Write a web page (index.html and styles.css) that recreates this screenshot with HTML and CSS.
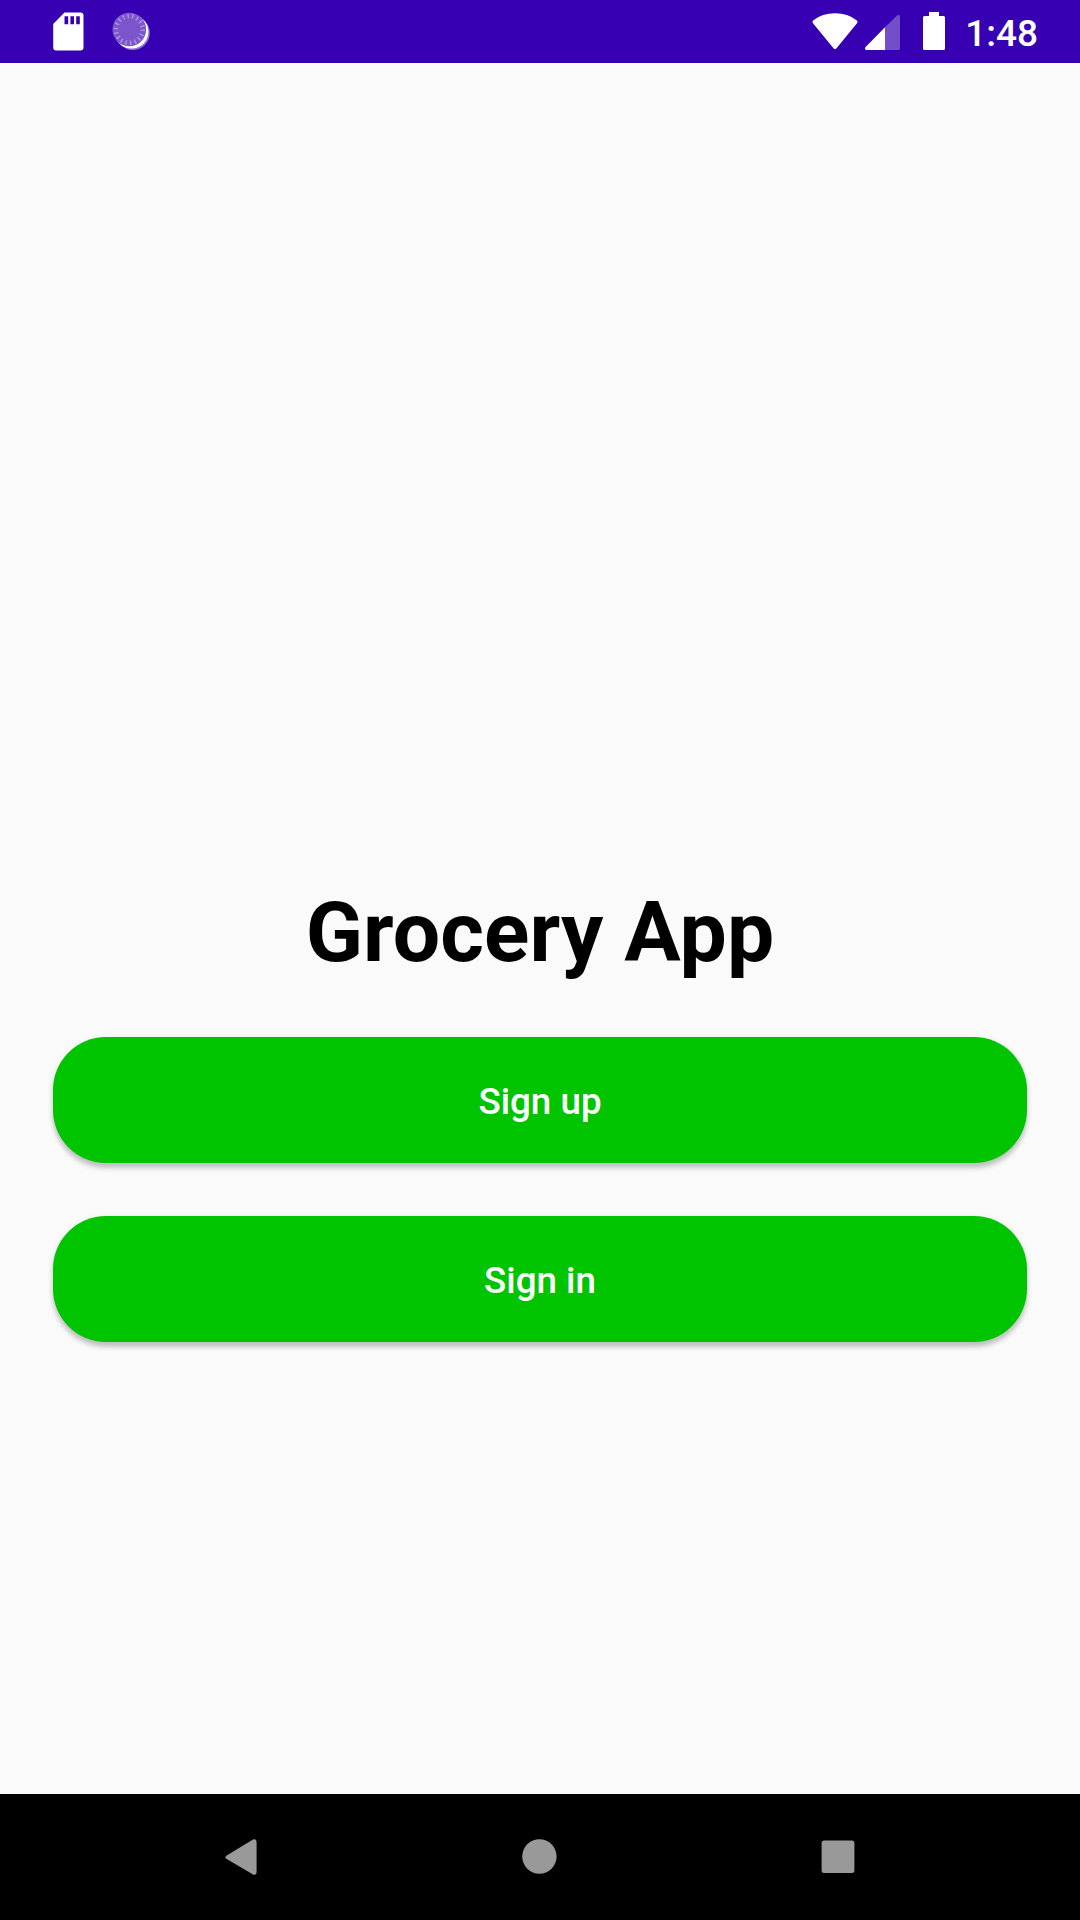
FILE: index.html
```html
<!DOCTYPE html>
<html lang="en">
<head>
<meta charset="utf-8">
<title>Grocery App</title>
<link rel="stylesheet" href="styles.css">
</head>
<body>
<div class="screen">
  <header class="status-bar">
    <div class="status-group">
      <svg class="icon-sd" width="31" height="39" viewBox="0 0 31 39"><path fill="#fff" fill-rule="evenodd" d="M11.500 .5H27.500Q30.500 .5 30.500 3.500V35.500Q30.500 38.500 27.500 38.500H3.200Q.2 38.500 .2 35.500V12ZM11.500 4.200V12.200H15.200V4.200ZM17.400 4.200V12.200H21V4.200ZM23.200 4.200V12.200H26.800V4.200Z"/></svg>
      <svg class="icon-sync" width="41" height="41" viewBox="0 0 41 41">
        <circle cx="22.800" cy="23" r="17" fill="#fff" opacity=".45"/>
        <circle cx="21.500" cy="21.700" r="16.900" fill="#fff"/>
        <circle cx="19.300" cy="19.500" r="16.800" fill="#7c54cb"/>
        <circle cx="19.300" cy="19.500" r="13.400" fill="none" stroke="#a88fdc" stroke-width="4.600" stroke-dasharray="1.600 3.077"/>
      </svg>
    </div>
    <div class="status-group">
      <svg class="icon-wifi" width="46" height="38" viewBox="0 0 46 38"><path fill="#fff" d="M1.200 10.400Q-.4 8.600 1.400 7.300Q10 .2 23 .2T44.600 7.300Q46.400 8.600 44.800 10.400L24.500 35.200Q23 37 21.500 35.200Z"/></svg>
      <svg class="icon-signal" width="35" height="36" viewBox="0 0 35 36"><path fill="#fff" opacity=".3" d="M20 13.200V36H33.500Q35 36 35 34.500V2.400C35 .9 33.300 .5 32 1.500Z"/><path fill="#fff" d="M20 13.200V36H1.500C0 36-.5 34.200.6 33.100Z"/></svg>
      <svg class="icon-battery" width="22" height="38" viewBox="0 0 22 38"><path fill="#fff" d="M6 0H16V4H20.500Q22 4 22 5.500V36.500Q22 38 20.500 38H1.500Q0 38 0 36.500V5.500Q0 4 1.500 4H6Z"/></svg>
      <span class="clock">1:48</span>
    </div>
  </header>
  <main class="content">
    <h1 class="title">Grocery App</h1>
    <button class="action">Sign up</button>
    <button class="action">Sign in</button>
  </main>
  <nav class="nav-bar">
    <svg width="36" height="36" viewBox="0 0 36 36"><path fill="#999" d="M2.700 16.400 29 .6Q32.600-.6 32.600 3V33Q32.600 36.600 29 35.400L2.700 20Q.1 18.200 2.700 16.400Z"/></svg>
    <svg width="36" height="36" viewBox="0 0 36 36"><circle cx="17.400" cy="17.500" r="17.200" fill="#999"/></svg>
    <svg width="36" height="36" viewBox="0 0 36 36"><rect x="1.600" y="1.600" width="32.800" height="32.500" rx="2.500" fill="#999"/></svg>
  </nav>
</div>
</body>
</html>
```
FILE: styles.css
```css
body {
  margin: 0;
  font-family: Roboto, sans-serif;
}

.screen {
  display: flex;
  flex-direction: column;
  width: 1080px;
  height: 1920px;
  background: #fafafa;
  overflow: hidden;
}

.status-bar {
  display: flex;
  justify-content: space-between;
  height: 63px;
  padding: 0 42px 0 53px;
  box-sizing: border-box;
  background: #3700b3;
  color: #fff;
}

.status-group {
  display: flex;
  align-items: flex-start;
  padding-top: 12px;
}

.icon-sync {
  margin: -2px 0 0 26px;
}

.icon-wifi {
  margin-top: 1px;
}

.icon-signal {
  margin: 2px 23px 0 7px;
}

.clock {
  margin-left: 20px;
  font-size: 37px;
  font-weight: 500;
  line-height: 43px;
}

.content {
  display: flex;
  flex: 1;
  flex-direction: column;
  gap: 53px;
  padding: 821px 53px 0;
}

.title {
  margin: 0;
  height: 100px;
  color: #000;
  font-size: 84px;
  font-weight: 700;
  letter-spacing: .08px;
  line-height: 98px;
  text-align: center;
}

.action {
  height: 126px;
  padding: 2px 0 0;
  border: 0;
  border-radius: 53px;
  background: #00c400;
  box-shadow: 0 5px 5px rgba(0, 0, 0, .21), 0 1px 7px rgba(0, 0, 0, .06);
  color: #fff;
  font-family: inherit;
  font-size: 36.75px;
  font-weight: 500;
}

.nav-bar {
  display: flex;
  align-items: center;
  justify-content: space-between;
  height: 126px;
  padding: 0 224px;
  box-sizing: border-box;
  background: #000;
}
```
